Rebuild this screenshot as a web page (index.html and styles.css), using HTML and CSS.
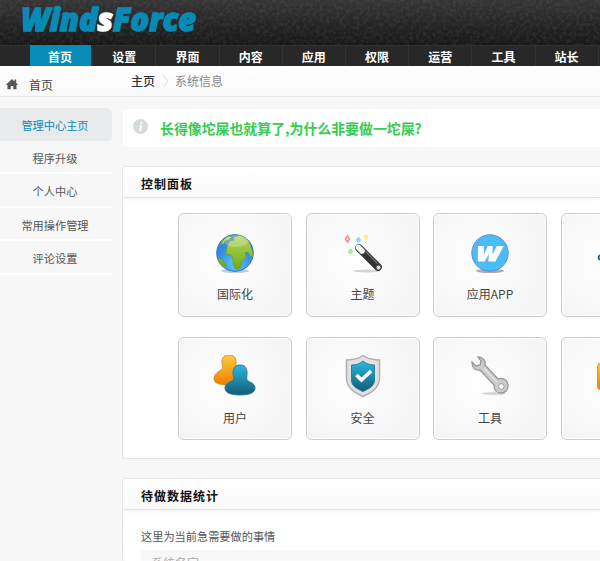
FILE: index.html
```html
<!DOCTYPE html>
<html lang="zh-CN">
<head>
<meta charset="utf-8">
<title>WindsForce</title>
<link rel="stylesheet" href="styles.css">
</head>
<body>
<header class="masthead">
  <svg class="texture" width="600" height="45"><filter id="grain"><feTurbulence type="fractalNoise" baseFrequency=".3" numOctaves="2"/><feColorMatrix values="0 0 0 0 .35  0 0 0 0 .35  0 0 0 0 .35  1 0 0 0 -.38"/></filter><rect width="600" height="45" filter="url(#grain)"/></svg>
  <svg class="logo" width="200" height="45"><text x="21" y="30.5" textLength="175" lengthAdjust="spacingAndGlyphs">Wind<tspan class="logo-s">s</tspan>Force</text></svg>
</header>
<nav class="nav"><a class="active">首页</a><a>设置</a><a>界面</a><a>内容</a><a>应用</a><a>权限</a><a>运营</a><a>工具</a><a>站长</a></nav>
<div class="crumbs">
  <svg class="home" width="14" height="12" viewBox="0 0 14 12"><path d="M7 1L.8 7h1.700v4.300h3.200V8h2.600v3.300h3.200V7h1.700L11.200 5V1.500H9.500v1.900z"/></svg>
  <span class="section">首页</span>
  <strong>主页</strong>
  <svg class="chevron" width="8" height="14" viewBox="0 0 8 14"><path d="M1 1l5 6-5 6"/></svg>
  <span class="here">系统信息</span>
</div>
<div class="layout">
  <aside class="side"><a class="active">管理中心主页</a><a>程序升级</a><a>个人中心</a><a>常用操作管理</a><a>评论设置</a></aside>
  <main class="main">
    <div class="notice"><span class="info">i</span><strong>长得像坨屎也就算了,为什么非要做一坨屎?</strong></div>
    <section class="panel controls">
      <h2>控制面板</h2>
      <div class="cards">
        <a class="card"><svg width="46" height="46" viewBox="0 0 46 46">
          <defs><radialGradient id="sea" cy=".8"><stop stop-color="#5bcaff"/><stop offset="1" stop-color="#3388e4"/></radialGradient><linearGradient id="land" x2="0" y2="1"><stop stop-color="#b4d665"/><stop offset="1" stop-color="#72ad0c"/></linearGradient><clipPath id="disc"><circle cx="23" cy="22" r="18"/></clipPath></defs>
          <ellipse cx="23" cy="40" rx="14" ry="2" fill="#aaa" opacity=".6"/><circle cx="23" cy="22" r="18.300" fill="url(#sea)" stroke="#3478bb"/>
          <g clip-path="url(#disc)" fill="url(#land)" stroke="#5c9a45" stroke-width=".7"><path d="M15 15l3-5 4-1-1-3 8-2 8 6 4 12v4l-3-1-2-4-3 1 1 4-4 4-2 7-4 1-3-4v-6l-2-4-5-1z"/><path d="M9 14l1-4 6-5 4 1-3 3-4 1-1 3zM5 27l4 1 4 4 2 3-4 1-6-4z"/></g><ellipse cx="24" cy="10" rx="12" ry="6" fill="#fff" opacity=".23"/>
        </svg><span>国际化</span></a>
        <a class="card"><svg width="46" height="46" viewBox="0 0 46 46">
          <ellipse cx="27" cy="40" rx="14" ry="1.500" fill="#bbb" opacity=".6"/>
          <g fill="none" stroke-width="1.600"><path stroke="#ff8c8c" d="M7.500 5l2 3-2 3-2-3z"/><path stroke="#84ccff" d="M18.500 7l1.600 2-1.600 2-1.600-2z"/><path stroke="#ffe982" d="M26 4l1.700 2.300L26 8.500l-1.700-2.200z"/><path stroke="#92ec92" d="M10.500 18.500l1.600 2-1.600 2-1.600-2z"/></g>
          <path d="M19 17l19 19" stroke="#333" stroke-width="7.600" stroke-linecap="round"/><path d="M18.500 16.500l3.500 3.500" stroke="#f4f4f4" stroke-width="5.600" stroke-linecap="round"/><path d="M25.500 20.500l12 12" stroke="#777" stroke-width="1.200"/><circle cx="38.500" cy="36.500" r="2.500" fill="#ddd" stroke="#444"/>
        </svg><span>主题</span></a>
        <a class="card"><svg width="46" height="46" viewBox="0 0 46 46">
          <ellipse cx="23" cy="40" rx="14" ry="2" fill="#888" opacity=".7"/><circle cx="23" cy="22" r="18.200" fill="#4bbcf8" stroke="#5c8fd4"/><path d="M11 15h6l-.3 9 4-9h5l-.2 9 4.200-9h7l-8.300 15.500h-7l.4-7.500-4 7.500h-7z" fill="#fff"/>
        </svg><span>应用APP</span></a>
        <a class="card"><svg width="46" height="46" viewBox="0 0 46 46"><circle cx="6" cy="26.500" r="2.800" fill="#4b92bd" stroke="#174967"/></svg></a>
        <a class="card"><svg width="46" height="46" viewBox="0 0 46 46">
          <defs><linearGradient id="gold" x2="0" y2="1"><stop stop-color="#ffce3e"/><stop offset="1" stop-color="#ef7d00"/></linearGradient><linearGradient id="teal" x2="0" y2="1"><stop stop-color="#2bb9e5"/><stop offset="1" stop-color="#145b72"/></linearGradient></defs>
          <path d="M10 7c0-5 3-7 7-7s7 2 7 7c0 6-3 8-1 10 4 2 7 3 7 7 0 4-5 6-13 6C7 30 2 28 2 24c0-4 3-7 7-9 3-2 1-4 1-8z" fill="url(#gold)" stroke="#d68f2e"/><path d="M21 18c0-6 3-8 7-8s7 2 7 8c0 4-1 6 1 8 4 2 7 3 7 7 0 5-6 7-15 7s-15-2-15-7c0-4 4-6 7-7 3-2 1-4 1-8z" fill="url(#teal)" stroke="#267e9a"/>
        </svg><span>用户</span></a>
        <a class="card"><svg width="46" height="46" viewBox="0 0 46 46">
          <path d="M23 .5c4 3.500 9 4.200 16.500 4.500v18c0 10-8 15-16.500 18.500C14.500 38 6.500 33 6.500 23V5C14 4.700 19 4 23 .5z" fill="#e1e1e1" stroke="#b0b0b0" stroke-width="1.500"/><path d="M23 6c3 2.500 6 4 11.500 4v15c0 6-5 8.500-11.500 11.500C16.500 33.500 11.500 31 11.500 25V10C17 10 20 8.500 23 6z" fill="url(#teal)" stroke="#27829c"/><path d="M16.500 20l5 5L31 16" fill="none" stroke="#fff" stroke-width="3.600"/>
        </svg><span>安全</span></a>
        <a class="card"><svg width="46" height="46" viewBox="0 0 46 46">
          <ellipse cx="27" cy="38.500" rx="12" ry="1.500" fill="#bbb" opacity=".6"/><path d="M11 2c5 0 8 4 7 8l13 14c5-2 10 1 10 7 0 4-3 7-7 7s-7-3-7-8L13 15c-5 1-8-2-8-8l4 4 4-1 1-4z" fill="#ccc" stroke="#999" stroke-width="1.300"/><path d="M17 13l13 14" stroke="#e4e4e4" stroke-width="1.500"/><circle cx="34.300" cy="31.500" r="2.800" fill="#fff" stroke="#999"/>
        </svg><span>工具</span></a>
        <a class="card"><svg width="46" height="46" viewBox="0 0 46 46"><rect x="2.500" y="8" width="37" height="27" rx="4" fill="url(#gold)" stroke="#d68f2e"/></svg></a>
      </div>
    </section>
    <section class="panel todo">
      <h2>待做数据统计</h2>
      <p>这里为当前急需要做的事情</p>
      <div class="row">系统名字</div>
    </section>
  </main>
</div>
</body>
</html>
```
FILE: styles.css
```css
* { box-sizing: border-box; }
html, body { width: 600px; height: 561px; overflow: hidden; }
body { margin: 0; background: #f7f7f7; color: #555; font: 12px/16px "Noto Sans CJK SC", "Liberation Sans", sans-serif; }
.masthead { position: relative; height: 45px; background: linear-gradient(#353535, #171717); }
.texture { position: absolute; inset: 0; opacity: .3; }
.logo { position: relative; display: block; }
.logo text { font: italic 800 31px "Open Sans", sans-serif; fill: #078ab6; stroke: #078ab6; stroke-width: 1.400px; }
.logo .logo-s { fill: #fff; stroke: #fff; }
.nav { display: flex; height: 21px; padding-left: 30px; background: #282828; box-shadow: inset 0 1px #303030; }
.nav a { flex: 0 0 63.200px; border-right: 1px solid #343434; color: #fff; font-weight: 700; text-align: center; line-height: 24px; }
.nav .active { background: linear-gradient(#078cb7, #078cb7) 0 0 / 61px 100% no-repeat; padding-right: 2px; }
.crumbs { display: flex; align-items: flex-start; height: 31px; background: linear-gradient(#fff, #f9f9f9); border-bottom: 1px solid #e7eaea; }
.home { margin: 12px 0 0 5px; fill: #555; }
.section { width: 101px; margin: 11px 0 0 10px; color: #444; }
.crumbs strong { width: 31px; margin: 7px 0 0 1px; color: #303039; font-weight: 500; }
.chevron { margin: 8px 5px 0 0; fill: none; stroke: #ddd; }
.here { margin-top: 7px; color: #888; }
.layout { display: flex; }
.side { flex: 0 0 112px; padding-top: 11px; font-size: 11.200px; }
.side a { display: block; height: 33.400px; border-bottom: 2px solid #fff; text-align: center; line-height: 34px; padding-right: 2px; }
.side .active { height: 33px; border: 0; border-radius: 0 5px 5px 0; background: #e9eaeb; color: #078cb7; }
.main { flex: 0 0 477px; min-width: 0; margin-left: 11px; padding-top: 12px; }
.notice { display: flex; align-items: center; height: 38px; padding-left: 10px; border-radius: 4px 0 0 4px; background: #fff; }
.info { width: 15px; height: 15px; margin-top: -3px; border-radius: 50%; background: #d5dcd8; color: #fff; text-align: center; font: italic 700 13px/15px "Liberation Serif", serif; }
.notice strong { margin-left: 12px; color: #32cd52; font-size: 13.900px; font-weight: 700; }
.panel { margin-left: -1px; border: 1px solid #e5e6e7; border-right: 0; border-radius: 3px 0 0 3px; background: #fff; }
.panel h2 { height: 31px; margin: 0; padding-left: 18px; border-bottom: 1px solid #e1e2e3; background: linear-gradient(#fff, #f9f9f9); box-shadow: 0 1px 3px #eee; color: #111; font-size: 12px; line-height: 33px; letter-spacing: 1px; }
.controls { height: 293px; margin-top: 19px; overflow: hidden; }
.cards { display: grid; grid-template-columns: repeat(4, 114px); gap: 20px 13.500px; padding: 15px 0 0 55px; }
.card { display: flex; flex-direction: column; align-items: center; height: 103.500px; padding-top: 17px; border: 1px solid #ccc; border-radius: 6px; background: radial-gradient(circle at 40% 45%, #fff, #f5f5f5 75%); box-shadow: inset 0 0 0 1px #fff; color: #444; }
.card span { margin-top: 9px; }
.todo { height: 83px; margin-top: 19px; border-bottom: 0; overflow: hidden; }
.todo p { margin: 18px 0 6px 18px; font-size: 11.200px; }
.row { height: 40px; margin-left: 18px; padding: 5px 10px; background: linear-gradient(#f7f7f7, #fff); color: #aaa; }
```
